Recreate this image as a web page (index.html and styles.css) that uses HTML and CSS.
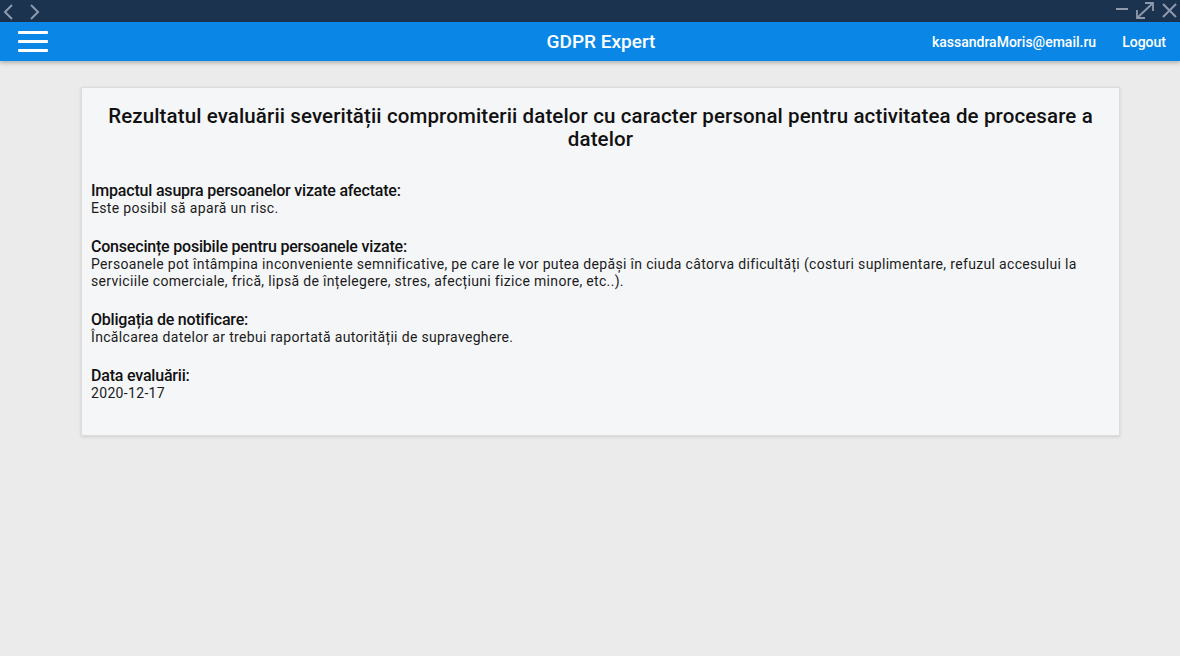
FILE: index.html
```html
<!DOCTYPE html>
<html lang="ro">
<head>
<meta charset="utf-8">
<link rel="stylesheet" href="styles.css">
</head>
<body>
<div class="titlebar">
  <div class="nav-arrows">
    <svg width="44" height="18" viewBox="0 0 44 18"><path d="M12 2 L5 9 L12 16" fill="none" stroke="#8e9aab" stroke-width="2"/><path d="M31 2 L38 9 L31 16" fill="none" stroke="#8e9aab" stroke-width="2"/></svg>
  </div>
  <div class="win-ctrls">
    <svg width="70" height="18" viewBox="0 0 70 18"><path d="M4 7 H16" stroke="#8e9aab" stroke-width="2"/><path d="M25 16 L41 1 M33 1 H41 V9 M25 8 V16 H33" fill="none" stroke="#8e9aab" stroke-width="1.8"/><path d="M51 2 L64 15 M64 2 L51 15" stroke="#8e9aab" stroke-width="2"/></svg>
  </div>
</div>
<header class="appbar">
  <div class="menu-btn">
    <span></span><span></span><span></span>
  </div>
  <div class="app-title">GDPR Expert</div>
  <div class="user-area">
    <span class="email">kassandraMoris@email.ru</span>
    <span class="logout">Logout</span>
  </div>
</header>
<main class="content">
  <section class="card">
    <h1 class="card-title">Rezultatul evaluării severității compromiterii datelor cu caracter personal pentru activitatea de procesare a datelor</h1>
    <div class="item">
      <div class="item-head">Impactul asupra persoanelor vizate afectate:</div>
      <div class="item-body">Este posibil să apară un risc.</div>
    </div>
    <div class="item">
      <div class="item-head">Consecințe posibile pentru persoanele vizate:</div>
      <div class="item-body">Persoanele pot întâmpina inconveniente semnificative, pe care le vor putea depăși în ciuda câtorva dificultăți (costuri suplimentare, refuzul accesului la serviciile comerciale, frică, lipsă de înțelegere, stres, afecțiuni fizice minore, etc..).</div>
    </div>
    <div class="item">
      <div class="item-head">Obligația de notificare:</div>
      <div class="item-body">Încălcarea datelor ar trebui raportată autorității de supraveghere.</div>
    </div>
    <div class="item">
      <div class="item-head">Data evaluării:</div>
      <div class="item-body">2020-12-17</div>
    </div>
  </section>
</main>
</body>
</html>
```
FILE: styles.css
```css
* { box-sizing: border-box; }
html, body { margin: 0; padding: 0; }
body {
  width: 1180px;
  height: 656px;
  overflow: hidden;
  background: #ebebeb;
  font-family: Roboto, "Liberation Sans", sans-serif;
  color: #111;
}
.titlebar {
  height: 22px;
  background: #1c3350;
  display: flex;
  justify-content: space-between;
  align-items: center;
}
.nav-arrows { display: flex; padding-top: 2px; }
.nav-arrows svg, .win-ctrls svg { display: block; }
.win-ctrls { display: flex; margin-right: -2px; }
.appbar {
  height: 39px;
  background: #0a87e6;
  display: grid;
  grid-template-columns: 1fr auto 1fr;
  align-items: center;
  padding: 0 14px 0 18px;
  color: #fff;
  box-shadow: 0 2px 4px rgba(0,0,0,0.25);
  position: relative;
}
.menu-btn {
  width: 30px;
  display: flex;
  flex-direction: column;
  gap: 6px;
}
.menu-btn span {
  display: block;
  height: 3px;
  background: #fff;
  border-radius: 1px;
}
.app-title {
  text-align: center;
  font-size: 19px;
  font-weight: 500;
  padding-left: 18px;
}
.user-area {
  display: flex;
  justify-content: flex-end;
  gap: 26px;
  font-size: 14px;
  font-weight: 500;
}
.content {
  padding: 26px 60px 0 81px;
}
.card {
  width: 1039px;
  background: #f5f6f8;
  border: 1px solid #dcdcdc;
  box-shadow: 0 1px 3px rgba(0,0,0,0.12);
  padding: 17px 9px 33px 9px;
}
.card-title {
  margin: 0 0 31px;
  font-size: 20.5px;
  line-height: 23px;
  font-weight: 500;
  letter-spacing: 0.12px;
  text-align: center;
  padding: 0 10px;
}
.item { margin-bottom: 21px; }
.item:last-child { margin-bottom: 0; }
.item-head {
  font-size: 16px;
  line-height: 18px;
  font-weight: 500;
  letter-spacing: -0.2px;
}
.item-body {
  font-size: 14px;
  line-height: 17px;
  letter-spacing: 0.33px;
  color: #1c1c1c;
}
```
